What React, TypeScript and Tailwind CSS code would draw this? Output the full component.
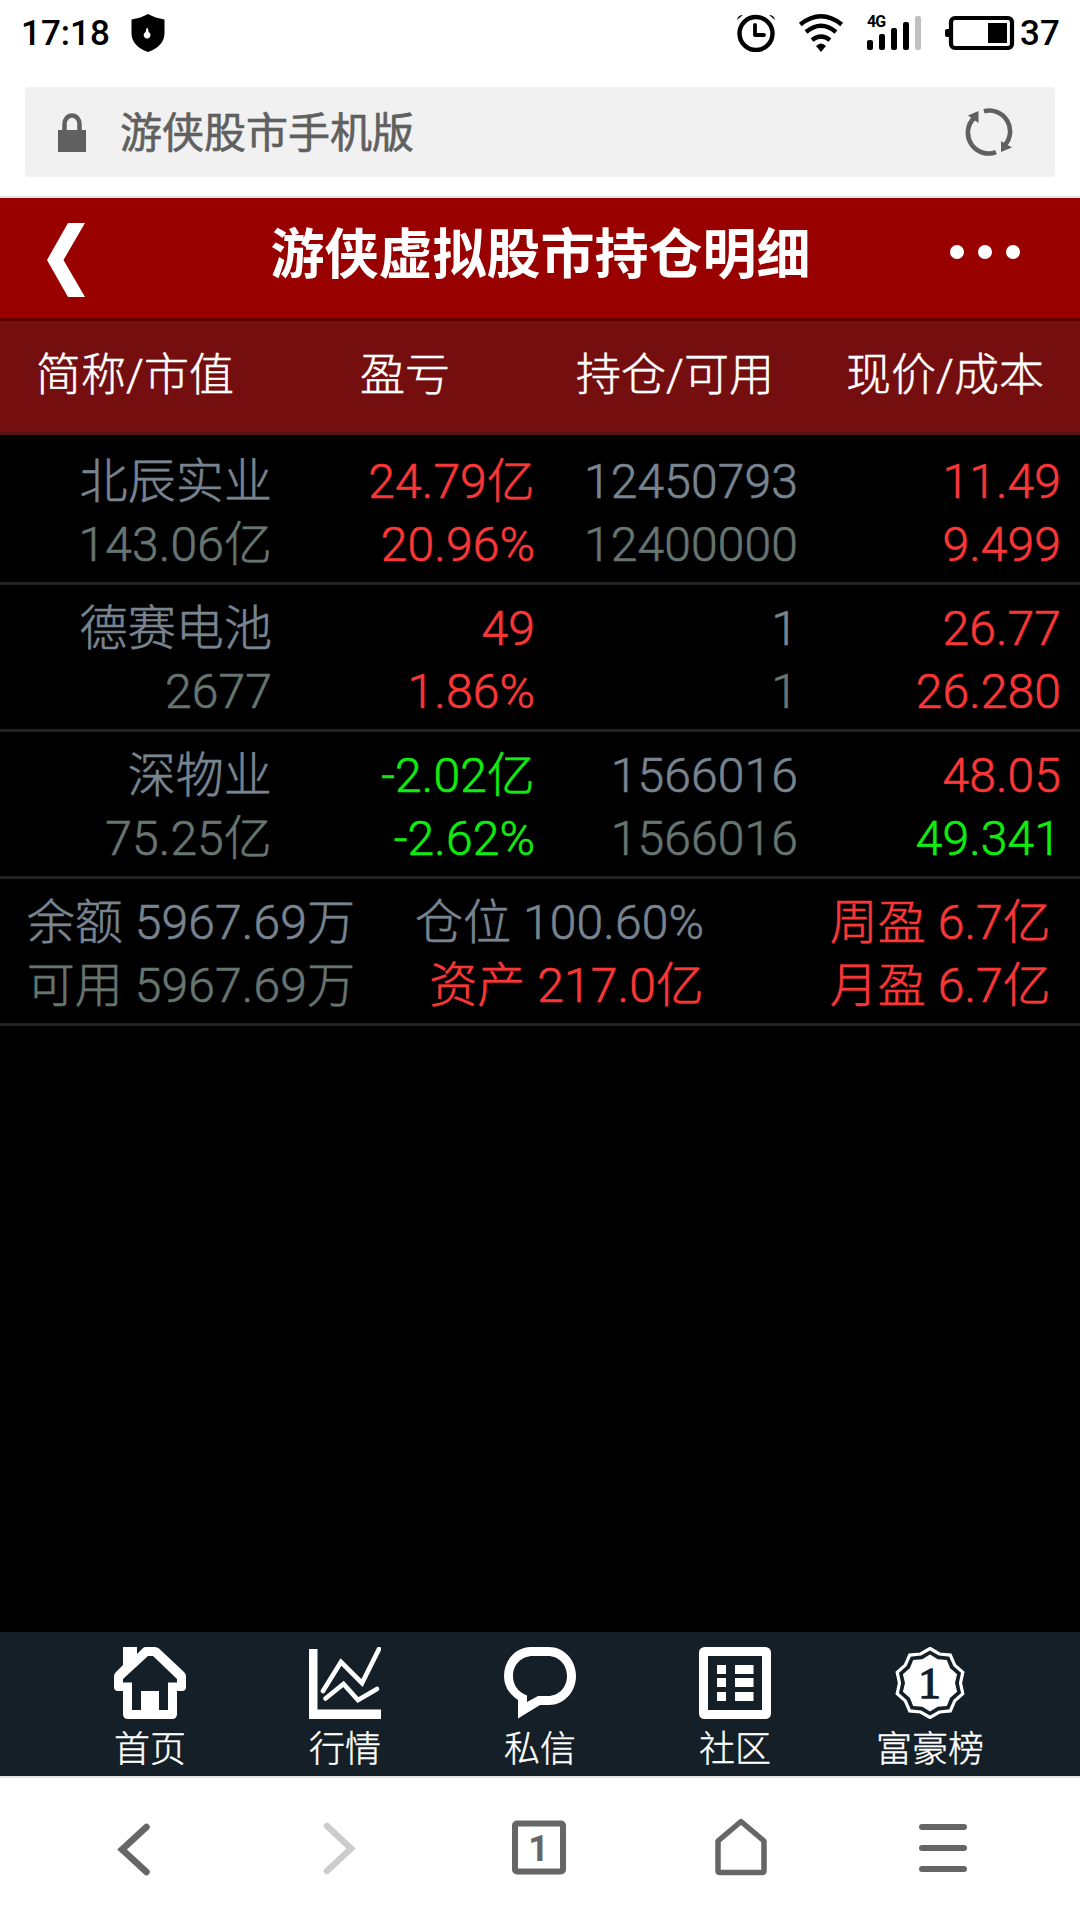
import type { ReactNode } from "react";

const GRAY = "text-[#788490]";
const DIM = "text-[#667570]";
const RED = "text-[#fa3737]";
const GREEN = "text-[#10ec10]";

type Cell = { a: string; b: string; ca: string; cb: string };

const cell = (a: string, b: string, ca: string, cb: string): Cell => ({ a, b, ca, cb });

const rows: Cell[][] = [
  [
    cell("北辰实业", "143.06亿", GRAY, DIM),
    cell("24.79亿", "20.96%", RED, RED),
    cell("12450793", "12400000", GRAY, DIM),
    cell("11.49", "9.499", RED, RED),
  ],
  [
    cell("德赛电池", "2677", GRAY, DIM),
    cell("49", "1.86%", RED, RED),
    cell("1", "1", GRAY, DIM),
    cell("26.77", "26.280", RED, RED),
  ],
  [
    cell("深物业", "75.25亿", GRAY, DIM),
    cell("-2.02亿", "-2.62%", GREEN, GREEN),
    cell("1566016", "1566016", GRAY, DIM),
    cell("48.05", "49.341", RED, GREEN),
  ],
];

const summary: Cell[] = [
  cell("余额 5967.69万", "可用 5967.69万", GRAY, DIM),
  cell("仓位 100.60%", "资产 217.0亿", GRAY, RED),
  cell("周盈 6.7亿", "月盈 6.7亿", RED, RED),
];

function Pair({ c }: { c: Cell }) {
  return (
    <div className="flex flex-col items-end whitespace-nowrap">
      <span className={`h-[63px] leading-[63px] [-webkit-text-stroke:0.6px_currentColor] ${c.ca}`}>{c.a}</span>
      <span className={`h-[63px] leading-[63px] [-webkit-text-stroke:0.6px_currentColor] ${c.cb}`}>{c.b}</span>
    </div>
  );
}

function StatusBar() {
  return (
    <div className="flex h-[87px] items-start justify-between pl-[21px] pr-[20px] text-[35px] font-medium leading-[36px] text-black">
      <div className="flex items-start gap-[22px] pt-[14px]">
        <span className="h-[38px] w-[88px] leading-[39px]">17:18</span>
        <svg width="34" height="38" viewBox="0 0 34 38">
          <path d="M17 0 Q24 4 33.500 5.500 V19 Q33.500 32 17 38 Q.5 32 .5 19 V5.500 Q10 4 17 0Z" fill="#000" />
          <path d="M15.400 14.500 a1 1 0 0 1 1.600 0 L17.600 18 a3.400 3.400 0 1 1-3 0Z" fill="#fff" />
        </svg>
      </div>
      <div className="flex items-start pt-[14px]">
        <svg width="38" height="38" viewBox="0 0 38 38" fill="none" stroke="#000">
          <circle cx="19" cy="19.500" r="16.500" strokeWidth="4.400" />
          <path d="M18 11 V21 H27" strokeWidth="3.800" strokeLinecap="round" strokeLinejoin="round" />
          <path d="M0 6 Q1 1 6 .8Z M38 6 Q37 1 32 .8Z" fill="#000" stroke="none" />
        </svg>
        <svg className="ml-[23px]" width="46" height="38" viewBox="0 0 46 38" fill="none" stroke="#000" strokeWidth="4.400">
          <path d="M2.300 10.500 Q23 -5.800 43.700 10.500" />
          <path d="M8 18 Q23 5.500 38 18" />
          <path d="M14 26 Q23 19 32 26" />
          <path d="M18 32 Q23 27 28 32 L23 38Z" fill="#000" stroke="none" />
        </svg>
        <div className="relative ml-[23px] h-[38px] w-[54px]">
          <span className="absolute left-0 top-0 text-[16px] font-bold leading-[16px] tracking-[-1px]">4G</span>
          <div className="mt-[2px] flex h-[34px] items-end gap-[6px]">
            <i className="h-[10px] w-[6px] rounded-[2px] bg-black" />
            <i className="h-[16px] w-[6px] rounded-[2px] bg-black" />
            <i className="h-[22px] w-[6px] rounded-[2px] bg-black" />
            <i className="h-[28px] w-[6px] rounded-[2px] bg-black" />
            <i className="h-[34px] w-[6px] rounded-[2px] bg-[#c0c0c0]" />
          </div>
        </div>
        <svg className="ml-[24px]" width="70" height="38" viewBox="0 0 70 38">
          <rect x="6" y="4" width="61" height="30" rx="4" fill="none" stroke="#000" strokeWidth="4.200" />
          <rect x="0" y="15" width="6" height="8" rx="2" />
          <rect x="43" y="9" width="19" height="20" />
        </svg>
        <span className="ml-[5px] h-[38px] w-[40px] leading-[39px]">37</span>
      </div>
    </div>
  );
}

function AddressBar() {
  return (
    <div className="mx-[25px] flex h-[90px] items-center rounded-[4px] bg-[#f1f1f1] pl-[33px] pr-[42px]">
      <svg width="28" height="40" viewBox="0 0 28 40">
        <path d="M6.500 19 V12 a7.500 8.500 0 0 1 15 0 V19" fill="none" stroke="#606060" strokeWidth="4.500" />
        <rect x="0" y="18" width="28" height="22" fill="#606060" />
      </svg>
      <span className="ml-[34px] mt-[4px] flex-1 text-[42px] leading-[60px] text-[#606060] [-webkit-text-stroke:0.6px_#606060]">
        游侠股市手机版
      </span>
      <svg width="48" height="48" viewBox="0 0 48 48" fill="none" stroke="#606060" strokeWidth="4.600">
        <path d="M19 3.200 A20.800 20.800 0 0 1 39.500 37.500" />
        <path d="M31 44.200 A20.800 20.800 0 0 1 9 10" />
        <path d="M3 7.500 L13.500 3 V15Z" fill="#606060" stroke="none" />
        <path d="M36 33 L47 39.500 L36 44Z" fill="#606060" stroke="none" />
      </svg>
    </div>
  );
}

function TitleBar() {
  return (
    <header className="flex h-[123px] items-start justify-between border-b-[3px] border-[#660000] bg-[#990000] pl-[47px] pr-[60px] text-white">
      <svg className="mt-[25px]" width="84" height="74" viewBox="0 0 84 74">
        <path d="M21 0 H38 L16.500 37 L38 74 H21 L0 37Z" fill="#fff" />
      </svg>
      <h1 className="mt-[18px] whitespace-nowrap text-[54px] font-bold leading-[80px]">游侠虚拟股市持仓明细</h1>
      <div className="mt-[47px] flex w-[70px] justify-between">
        <i className="size-[14px] rounded-full bg-white" />
        <i className="size-[14px] rounded-full bg-white" />
        <i className="size-[14px] rounded-full bg-white" />
      </div>
    </header>
  );
}

function Tab({ label, children }: { label: string; children: ReactNode }) {
  return (
    <div className="flex w-[195px] flex-col items-center">
      <svg width="72" height="72" viewBox="0 0 72 72" fill="none" stroke="#fff">
        {children}
      </svg>
      <span className="mt-[5px] h-[52px] text-[36px] font-light leading-[52px] text-white [-webkit-text-stroke:0.4px_#fff]">
        {label}
      </span>
    </div>
  );
}

const star = (outer: number, inner: number) =>
  Array.from({ length: 20 }, (_, i) => {
    const r = i % 2 ? inner : outer;
    const t = (i * Math.PI) / 10 - Math.PI / 2;
    return `${(36 + r * Math.cos(t)).toFixed(1)},${(36 + r * Math.sin(t)).toFixed(1)}`;
  }).join(" ");

function TabBar() {
  return (
    <nav className="flex h-[144px] justify-center bg-[#151f27] pt-[15px]">
      <Tab label="首页">
        <path
          fillRule="evenodd"
          fill="#fff"
          stroke="none"
          d="M9 0 H23 V7 L29 1 Q30 0 32 0 H41 Q43 0 45 1.500 L70 25 Q72 27 72 29 V40 Q72 44 68 44 H63 V67 Q63 72 58 72 H14 Q9 72 9 67 V44 H4 Q0 44 0 40 V29 Q0 27 2 25 L9 18Z M34 9 L9 32 V35.500 H18 V63 H27 V44 H45 V63 H54 V35.500 H63 V32 L39 9Z"
        />
      </Tab>
      <Tab label="行情">
        <path d="M0 2 H8.500 V62.500 H72 V72 H0Z" fill="#fff" stroke="none" />
        <path d="M14 44 L32 15 L53 36 L70 2" strokeWidth="4.600" strokeLinecap="round" />
        <path d="M16.500 51.500 L34.500 37 L49 53 L68 42" strokeWidth="4.600" strokeLinecap="round" />
      </Tab>
      <Tab label="私信">
        <path
          fillRule="evenodd"
          fill="#fff"
          stroke="none"
          d="M27 0 H45 C60 0 72 13 72 29 C72 45 60 58 45 58 H36 L14 71.500 V53 C5 47 0 39 0 29 C0 13 12 0 27 0Z M29 9 C17 9 9 18 9 29 C9 38 14 45 23 48.500 V55 L34 49 H44 C55 49 63 40 63 29 C63 18 55 9 44 9Z"
        />
      </Tab>
      <Tab label="社区">
        <rect x="4.500" y="4.500" width="63" height="63" rx="1" strokeWidth="9" />
        <path
          d="M18 18h9v9h-9z M18 31h9v9h-9z M18 45h9v9h-9z M36 18h18.500v9h-18.500z M36 31h18.500v9h-18.500z M36 45h18.500v9h-18.500z"
          fill="#fff"
          stroke="none"
        />
      </Tab>
      <Tab label="富豪榜">
        <polygon points={star(34.5, 30.5)} strokeWidth="3.200" />
        <polygon points={star(28.5, 25)} fill="#fff" stroke="none" />
        <text
          x="35.500"
          y="50.500"
          textAnchor="middle"
          fill="#151f27"
          stroke="#151f27"
          strokeWidth="1.500"
          className="font-['Liberation_Serif',serif] text-[45px]"
        >
          1
        </text>
      </Tab>
    </nav>
  );
}

function BrowserBar() {
  return (
    <div className="flex h-[144px] items-start justify-center border-t-2 border-[#e2e3e6] bg-white pt-[36px]">
      <div className="flex w-[202px] justify-center">
        <svg width="60" height="66" viewBox="0 0 60 66" fill="none" stroke="#666" strokeWidth="6.500">
          <path d="M40.500 13 L16 35.500 L40.500 58" strokeLinecap="round" />
        </svg>
      </div>
      <div className="flex w-[202px] justify-center">
        <svg width="60" height="66" viewBox="0 0 60 66" fill="none" stroke="#ccc" strokeWidth="6.500">
          <path d="M19 12 L43 34.500 L19 57" strokeLinecap="round" />
        </svg>
      </div>
      <div className="flex w-[202px] justify-center">
        <svg width="60" height="66" viewBox="0 0 60 66" fill="none" stroke="#666" strokeWidth="6">
          <rect x="5" y="9.500" width="48" height="48" rx="2" />
          <text x="28.500" y="47" textAnchor="middle" fill="#666" stroke="none" className="font-[Roboto] text-[36px] font-bold">
            1
          </text>
        </svg>
      </div>
      <div className="flex w-[202px] justify-center">
        <svg width="60" height="66" viewBox="0 0 60 66" fill="none" stroke="#666" strokeWidth="5.500">
          <path d="M6 27 L29 7.500 L52 27 V56.500 Q52 58.500 50 58.500 H8 Q6 58.500 6 56.500Z" strokeLinejoin="round" />
        </svg>
      </div>
      <div className="flex w-[202px] justify-center">
        <svg width="60" height="66" viewBox="0 0 60 66" fill="none" stroke="#666" strokeWidth="6" strokeLinecap="round">
          <path d="M8 13 H50 M8 34 H50 M8 55 H50" />
        </svg>
      </div>
    </div>
  );
}

export default function App() {
  return (
    <div className="flex h-[1920px] w-[1080px] flex-col overflow-hidden bg-white font-[Roboto,'Noto_Sans_CJK_SC',sans-serif]">
      <StatusBar />
      <AddressBar />
      <div className="mt-[19px] h-[2px] bg-[#e6e6e6]" />
      <TitleBar />
      <div className="grid h-[114px] grid-cols-4 border-b-[3px] border-[#551214] bg-[#750f0f] pt-[22px] text-center text-[45px] font-light leading-[66px] text-white [-webkit-text-stroke:0.5px_#fff]">
        <span>简称/市值</span>
        <span>盈亏</span>
        <span>持仓/可用</span>
        <span>现价/成本</span>
      </div>
      <main className="flex-1 bg-black pt-[3px] text-[48px] font-light tracking-[0.12px]">
        {rows.map((r, i) => (
          <div key={i} className="grid h-[147px] grid-cols-[272px_263px_263px_263px] border-b-[3px] border-[#222] pt-[12px]">
            {r.map((c, j) => (
              <Pair key={j} c={c} />
            ))}
          </div>
        ))}
        <div className="grid h-[147px] grid-cols-[355px_349px_347px] border-b-[3px] border-[#222] pt-[12px]">
          {summary.map((c, j) => (
            <Pair key={j} c={c} />
          ))}
        </div>
      </main>
      <TabBar />
      <BrowserBar />
    </div>
  );
}
